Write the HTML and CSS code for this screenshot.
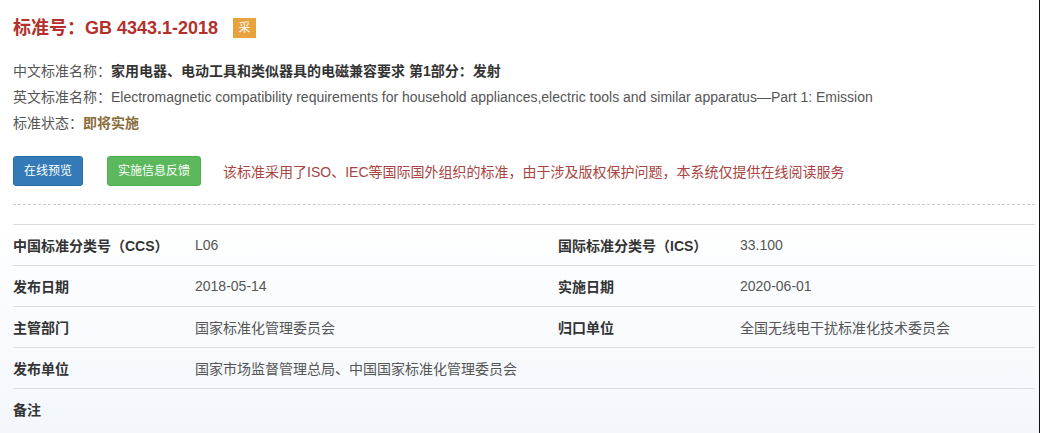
FILE: index.html
```html
<!DOCTYPE html>
<html lang="zh-CN">
<head>
    <meta charset="UTF-8" />
    <title>GB 4343.1-2018</title>
    <link rel="stylesheet" href="styles.css">
</head>
<body>
    <div class="page">
        <h1 class="std-title">标准号：GB 4343.1-2018 <span class="badge">采</span></h1>

        <div class="info">
            <p><span class="info-label">中文标准名称：</span><b>家用电器、电动工具和类似器具的电磁兼容要求 第1部分：发射</b></p>
            <p><span class="info-label">英文标准名称：</span>Electromagnetic compatibility requirements for household appliances,electric tools and similar apparatus—Part 1: Emission</p>
            <p><span class="info-label">标准状态：</span><b class="status">即将实施</b></p>
        </div>

        <div class="actions">
            <a class="btn btn-blue">在线预览</a>
            <a class="btn btn-green">实施信息反馈</a>
            <span class="notice">该标准采用了ISO、IEC等国际国外组织的标准，由于涉及版权保护问题，本系统仅提供在线阅读服务</span>
        </div>

        <hr class="dashed">

        <div class="detail">
            <div class="row">
                <span class="k">中国标准分类号（CCS）</span><span class="v">L06</span>
                <span class="k">国际标准分类号（ICS）</span><span class="v">33.100</span>
            </div>
            <div class="row">
                <span class="k">发布日期</span><span class="v">2018-05-14</span>
                <span class="k">实施日期</span><span class="v">2020-06-01</span>
            </div>
            <div class="row">
                <span class="k">主管部门</span><span class="v">国家标准化管理委员会</span>
                <span class="k">归口单位</span><span class="v">全国无线电干扰标准化技术委员会</span>
            </div>
            <div class="row">
                <span class="k">发布单位</span><span class="v wide">国家市场监督管理总局、中国国家标准化管理委员会</span>
            </div>
            <div class="row">
                <span class="k">备注</span><span class="v wide"></span>
            </div>
        </div>
    </div>
</body>
</html>
```

FILE: styles.css
```css
html,
body {
    margin: 0;
    height: 100%;
    overflow: hidden;
}

body {
    background: linear-gradient(#ffffff 50%, #f3f7fc 100%);
    border-right: 1px solid #111;
    box-sizing: border-box;
    font-family: "Liberation Sans", "Noto Sans CJK SC", sans-serif;
    font-size: 14px;
    color: #555;
}

.page {
    padding: 0 4px 0 13px;
}

.std-title {
    margin: 16px 0 0;
    font-size: 18px;
    line-height: 24px;
    font-weight: bold;
    color: #b3302c;
    display: flex;
    align-items: center;
}

.badge {
    display: inline-block;
    margin-left: 15px;
    width: 23px;
    height: 20px;
    line-height: 20px;
    text-align: center;
    font-size: 12px;
    font-weight: normal;
    color: #fff;
    background: #e8a33e;
}

.info {
    margin-top: 18px;
}

.info p {
    margin: 0;
    line-height: 26px;
    white-space: nowrap;
}

.info b {
    color: #333;
}

.info .status {
    color: #8a6d3b;
}

.actions {
    margin-top: 20px;
    display: flex;
    align-items: center;
}

.btn {
    display: inline-block;
    box-sizing: border-box;
    height: 30px;
    padding: 0 10px;
    line-height: 28px;
    font-size: 12px;
    color: #fff;
    border: 1px solid transparent;
    border-radius: 3px;
    margin-right: 24px;
}

.btn-blue {
    background: #337ab7;
    border-color: #2e6da4;
}

.btn-green {
    background: #5cb85c;
    border-color: #4cae4c;
    margin-right: 22px;
}

.notice {
    color: #a94442;
    font-size: 14px;
}

.dashed {
    margin: 18px 0 19px;
    border: 0;
    border-top: 1px dashed #ccc;
}

.row {
    display: grid;
    grid-template-columns: 182px 363px 182px 1fr;
    height: 41px;
    box-sizing: border-box;
    border-top: 1px solid #ddd;
    align-items: center;
}

.k {
    font-weight: bold;
    color: #333;
}

.v {
    color: #555;
}

.v.wide {
    grid-column: span 3;
}
```
